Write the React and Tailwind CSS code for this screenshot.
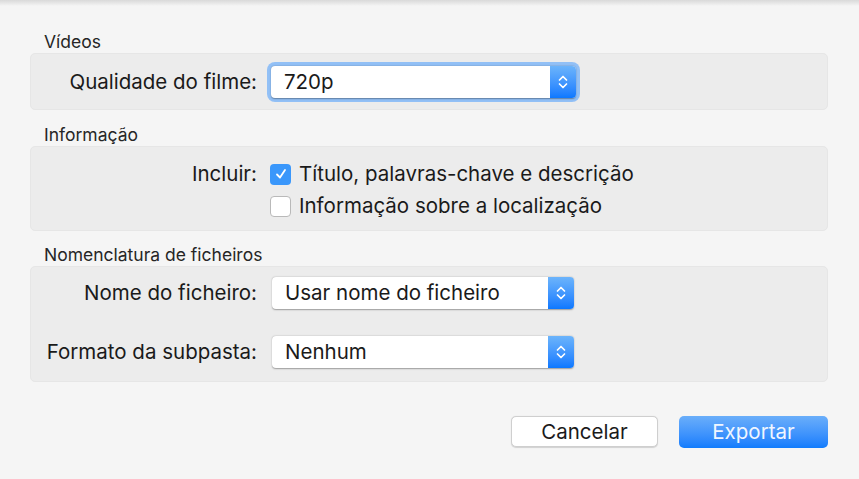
function Stepper() {
  return (
    <div className="w-[26px] self-stretch rounded-r-[4px] bg-gradient-to-b from-[#6cb4fb] to-[#0a78ff] flex items-center justify-center">
      <svg width="12" height="20" viewBox="0 0 12 20" fill="none">
        <path d="M2.5 8 L6 4.5 L9.5 8" stroke="white" strokeWidth="1.7" strokeLinecap="round" strokeLinejoin="round" />
        <path d="M2.5 12 L6 15.5 L9.5 12" stroke="white" strokeWidth="1.7" strokeLinecap="round" strokeLinejoin="round" />
      </svg>
    </div>
  );
}

function Select({ value, width }) {
  return (
    <div
      className={`${width} h-[32px] flex bg-white rounded-[4px] shadow-[0_0.5px_1.5px_rgba(0,0,0,0.35)]`}
    >
      <div className="flex-1 flex items-center pl-[13px] text-[20.5px] leading-[24px] text-[#1a1a1a]">{value}</div>
      <Stepper />
    </div>
  );
}

function Checkbox({ checked }) {
  if (checked) {
    return (
      <div className="w-[21px] h-[21px] rounded-[4px] bg-[#3a97fb] flex items-center justify-center">
        <svg width="14" height="14" viewBox="0 0 14 14" fill="none">
          <path d="M3 7.5 L6 10.5 L11 3" stroke="white" strokeWidth="1.8" strokeLinecap="round" strokeLinejoin="round" />
        </svg>
      </div>
    );
  }
  return <div className="w-[21px] h-[21px] rounded-[4px] bg-white border border-[#b9b9b9]" />;
}

function Section({ title, children, className }) {
  return (
    <div>
      <div className="h-[18px] pl-[14px] text-[17.5px] leading-[18px] text-[#262626]">{title}</div>
      <div className={`mt-[2px] rounded-[5px] bg-[#ececec] border border-[#e6e6e6] ${className}`}>{children}</div>
    </div>
  );
}

export default function App() {
  return (
    <div
      className="w-[859px] h-[479px] bg-[#f5f5f5] text-[#1a1a1a] overflow-hidden"
      style={{ fontFamily: "Inter, 'Noto Sans', sans-serif" }}
    >
      <div className="h-[6px] bg-gradient-to-b from-[#d9d9d9] to-[#f5f5f5]" />
      <div className="pl-[30px] pr-[31px] pt-[27px] flex flex-col">
        {/* Vídeos */}
        <Section title="Vídeos" className="h-[57px] flex items-center">
          <div className="w-[226px] text-right text-[20.5px] leading-[24px]">Qualidade do filme:</div>
          <div className="ml-[10px] p-[4px] rounded-[8px] bg-[#92c0f6]">
            <Select value="720p" width="w-[305px]" />
          </div>
        </Section>

        {/* Informação */}
        <div className="mt-[16px]">
          <Section title="Informação" className="h-[85px] flex flex-col justify-center gap-[10px] pt-[3px]">
            <div className="flex items-center h-[22px]">
              <div className="w-[226px] text-right text-[20.5px] leading-[24px]">Incluir:</div>
              <div className="ml-[13px]"><Checkbox checked /></div>
              <div className="ml-[8px] text-[20.5px] leading-[24px]">Título, palavras-chave e descrição</div>
            </div>
            <div className="flex items-center h-[22px]">
              <div className="w-[226px]" />
              <div className="ml-[13px]"><Checkbox /></div>
              <div className="ml-[8px] text-[20.5px] leading-[24px]">Informação sobre a localização</div>
            </div>
          </Section>
        </div>

        {/* Nomenclatura */}
        <div className="mt-[15px]">
          <Section title="Nomenclatura de ficheiros" className="h-[116px] flex flex-col pt-[10px] gap-[27px]">
            <div className="flex items-center">
              <div className="w-[226px] text-right text-[20.5px] leading-[24px]">Nome do ficheiro:</div>
              <div className="ml-[15px]"><Select value="Usar nome do ficheiro" width="w-[302px]" /></div>
            </div>
            <div className="flex items-center">
              <div className="w-[226px] text-right text-[20.5px] leading-[24px]">Formato da subpasta:</div>
              <div className="ml-[15px]"><Select value="Nenhum" width="w-[302px]" /></div>
            </div>
          </Section>
        </div>

        {/* Buttons */}
        <div className="mt-[34px] flex justify-end gap-[21px]">
          <button className="w-[147px] h-[31px] bg-white rounded-[5px] border border-[#cfcfcf] shadow-[0_0.5px_1px_rgba(0,0,0,0.15)] text-[20.5px] leading-[24px] text-[#1a1a1a]">
            Cancelar
          </button>
          <button className="w-[149px] h-[32px] rounded-[5px] bg-gradient-to-b from-[#6aaefa] to-[#0f7cfd] text-[20.5px] leading-[24px] text-[#f0f6ff]">
            Exportar
          </button>
        </div>
      </div>
    </div>
  );
}
